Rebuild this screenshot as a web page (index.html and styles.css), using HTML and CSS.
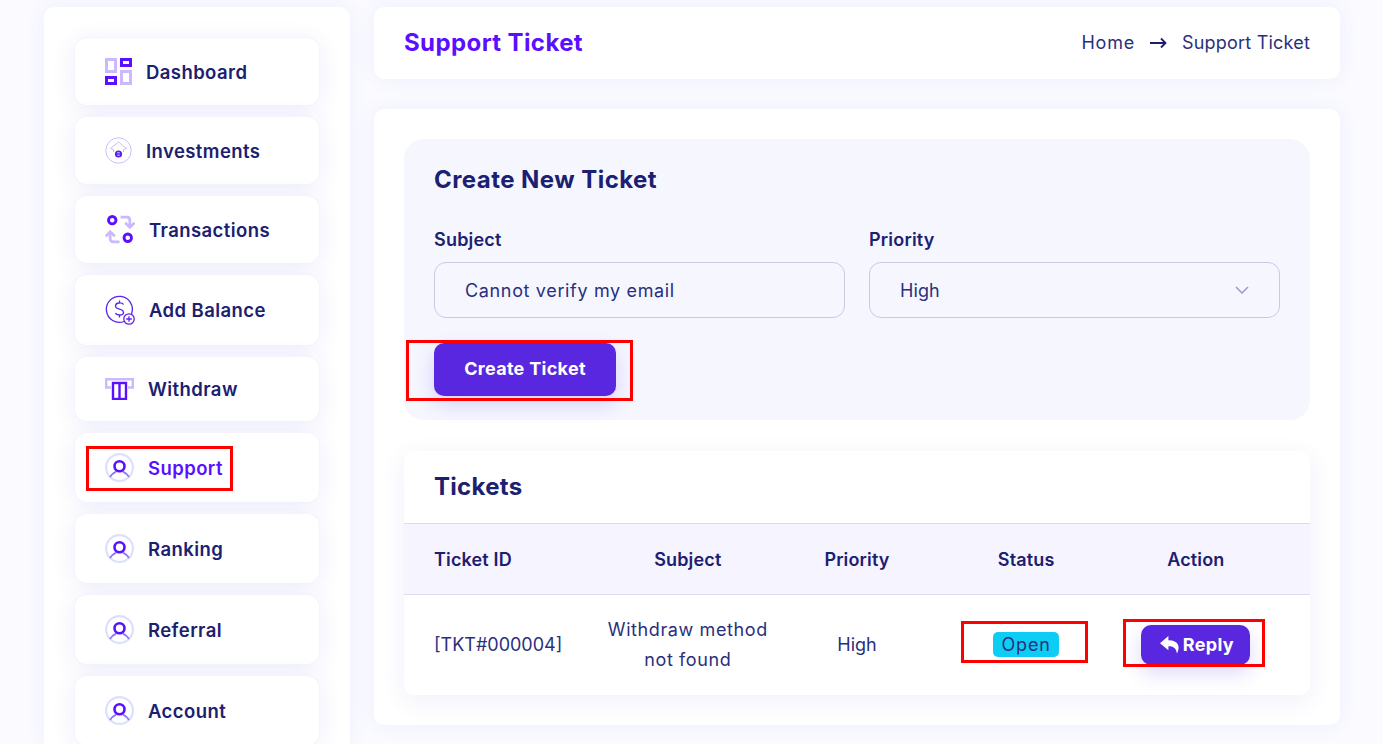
FILE: index.html
```html
<!DOCTYPE html>
<html lang="en">
<head>
<meta charset="UTF-8" />
<meta name="viewport" content="width=device-width, initial-scale=1.0"/>
<title>Support Ticket</title>
<link rel="stylesheet" href="styles.css">
</head>
<body>

<svg class="defs" width="0" height="0">
  <symbol id="user" viewBox="0 0 29 29">
    <circle cx="14.5" cy="14.5" r="13.4" fill="none" stroke="#dde0fd" stroke-width="2.2"/>
    <path d="M5 24 C6.5 21.5 8.5 19.8 11 18.6 M24 24 C22.5 21.5 20.5 19.8 18 18.6" fill="none" stroke="#8a7bf5" stroke-width="1.8"/>
    <circle cx="14.5" cy="13.2" r="5" fill="none" stroke="#5a10ff" stroke-width="2.6"/>
  </symbol>
</svg>

<div class="page">
  <aside class="sidebar">
    <a class="nav-item">
      <svg class="icon" width="27" height="27" viewBox="0 0 27 27">
        <rect x="1.5" y="1.5" width="9" height="12" fill="none" stroke="#cbb8ff" stroke-width="3"/>
        <rect x="16.5" y="1.5" width="9" height="6" fill="none" stroke="#5a10ff" stroke-width="3"/>
        <rect x="1.5" y="19.5" width="9" height="6" fill="none" stroke="#5a10ff" stroke-width="3"/>
        <rect x="16.5" y="13.5" width="9" height="12" fill="none" stroke="#cbb8ff" stroke-width="3"/>
      </svg>
      <span>Dashboard</span>
    </a>
    <a class="nav-item">
      <svg class="icon" width="27" height="27" viewBox="0 0 27 27">
        <circle cx="13.5" cy="13.5" r="12.7" fill="none" stroke="#cbbcff" stroke-width="1"/>
        <path d="M5.5 11.5 L13.5 5 L21.5 11.5 L18.5 12.5 V15 M8.5 15 V12.5 L5.5 11.5" fill="none" stroke="#cbbcff" stroke-width="1"/>
        <circle cx="13.5" cy="17" r="3.6" fill="#5a22e8"/>
        <path d="M12.2 15.8 H14.8 M12.2 18.2 H14.8" stroke="#fff" stroke-width=".8"/>
      </svg>
      <span>Investments</span>
    </a>
    <a class="nav-item">
      <svg class="icon" width="30" height="29" viewBox="0 0 29 28">
        <circle cx="7" cy="5" r="3.6" fill="none" stroke="#5a10ff" stroke-width="2.8"/>
        <circle cx="22" cy="22" r="3.6" fill="none" stroke="#5a10ff" stroke-width="2.8"/>
        <path d="M15 2 H21 Q24 2 24 5 V11 M19.5 7.5 L24 12 L28.5 7.5" fill="none" stroke="#cbb8ff" stroke-width="2.6"/>
        <path d="M14 26 H8 Q5 26 5 23 V17 M.8 20.5 L5 16 L9.5 20.5" fill="none" stroke="#cbb8ff" stroke-width="2.6"/>
      </svg>
      <span>Transactions</span>
    </a>
    <a class="nav-item">
      <svg class="icon" width="30" height="30" viewBox="0 0 30 30">
        <path d="M19 26.5 A13 13 0 1 1 26.5 19" fill="none" stroke="#5a22e8" stroke-width="1.3"/>
        <path d="M18.5 9.5 C17.5 7.5 10.5 7 10.5 11 C10.5 15.5 18.5 12.5 18.5 17.5 C18.5 21 11.5 20.5 10.5 18 M14.5 5.5 V8 M14.5 20 V22.5" fill="none" stroke="#5a22e8" stroke-width="1.3"/>
        <circle cx="24" cy="24" r="5.2" fill="#fff" stroke="#5a22e8" stroke-width="1.3"/>
        <path d="M21.2 24 H26.8 M24 21.2 V26.8" stroke="#5a22e8" stroke-width="1.3"/>
      </svg>
      <span>Add Balance</span>
    </a>
    <a class="nav-item">
      <svg class="icon" width="29" height="22" viewBox="0 0 29 22">
        <path d="M6 9.5 H1.2 V1.2 H27.8 V9.5 H23" fill="none" stroke="#cbb8ff" stroke-width="2.4"/>
        <rect x="8" y="5" width="13" height="16" fill="#fff" stroke="#5a10ff" stroke-width="2.4"/>
        <path d="M14.5 5 V21" stroke="#5a10ff" stroke-width="2.4"/>
      </svg>
      <span>Withdraw</span>
    </a>
    <a class="nav-item active">
      <svg class="icon" width="29" height="29"><use href="#user"/></svg>
      <span>Support</span>
    </a>
    <a class="nav-item">
      <svg class="icon" width="29" height="29"><use href="#user"/></svg>
      <span>Ranking</span>
    </a>
    <a class="nav-item">
      <svg class="icon" width="29" height="29"><use href="#user"/></svg>
      <span>Referral</span>
    </a>
    <a class="nav-item">
      <svg class="icon" width="29" height="29"><use href="#user"/></svg>
      <span>Account</span>
    </a>
  </aside>

  <main class="main">
    <header class="page-head">
      <h2>Support Ticket</h2>
      <div class="crumbs">
        <span class="crumb-home">Home</span>
        <svg width="17" height="12" viewBox="0 0 17 12"><path d="M0 6 H15.5 M11 1.5 L15.5 6 L11 10.5" fill="none" stroke="#1b1f6e" stroke-width="1.8"/></svg>
        <span>Support Ticket</span>
      </div>
    </header>

    <section class="content">
      <div class="create-panel">
        <h3>Create New Ticket</h3>
        <div class="form-row">
          <div class="field">
            <label for="subject">Subject</label>
            <input id="subject" type="text" value="Cannot verify my email">
          </div>
          <div class="field">
            <label>Priority</label>
            <div class="select">
              <span>High</span>
              <svg width="14" height="8" viewBox="0 0 14 8"><path d="M1 1 L7 7 L13 1" fill="none" stroke="#9d9fc9" stroke-width="1.6"/></svg>
            </div>
          </div>
        </div>
        <button class="btn btn-create">Create Ticket</button>
      </div>

      <div class="tickets">
        <h3>Tickets</h3>
        <table>
          <thead>
            <tr>
              <th class="col-id">Ticket ID</th>
              <th>Subject</th>
              <th>Priority</th>
              <th>Status</th>
              <th class="col-action">Action</th>
            </tr>
          </thead>
          <tbody>
            <tr>
              <td class="col-id">[TKT#000004]</td>
              <td class="wide-text">Withdraw method not found</td>
              <td>High</td>
              <td><span class="badge">Open</span></td>
              <td class="col-action">
                <button class="btn btn-reply">
                  <svg width="21" height="18" viewBox="0 0 20 17"><path d="M8 0 L0 6.8 L8 13.6 V9.6 C12.5 9.6 15 10.8 16.2 16.5 C19.5 10.5 18 4 8 3.9 Z" fill="#fff"/></svg>
                  Reply
                </button>
              </td>
            </tr>
          </tbody>
        </table>
      </div>
    </section>
  </main>
</div>

<!-- red review boxes drawn over the shot -->
<div class="mark mark-support"></div>
<div class="mark mark-create"></div>
<div class="mark mark-open"></div>
<div class="mark mark-reply"></div>

</body>
</html>
```

FILE: styles.css
```css
* {
  box-sizing: border-box;
}

body {
  margin: 0;
  height: 744px;
  overflow: hidden;
  position: relative;
  font-family: Inter, "Noto Sans", sans-serif;
  background: #fafaff;
  color: #1b2070;
}

.defs {
  display: block;
  height: 0;
}

.page {
  display: flex;
  gap: 24px;
  height: 744px;
  overflow: hidden;
  padding: 7px 43px 0 44px;
  align-items: flex-start;
}

/* sidebar */
.sidebar {
  width: 306px;
  height: 737px;
  flex: none;
  display: flex;
  flex-direction: column;
  gap: 12px;
  padding: 31px 31px 0;
  overflow: hidden;
  background: #fff;
  border-radius: 10px 10px 0 0;
  box-shadow: 0 0 20px rgba(90, 80, 220, 0.07);
}

.nav-item {
  display: flex;
  align-items: center;
  gap: 14px;
  height: 69px;
  padding-left: 30px;
  background: #fff;
  border-radius: 12px;
  box-shadow: 0 0 0 1px #f4f4fc, 0 4px 24px rgba(70, 70, 220, 0.1);
  font-size: 18.5px;
  font-weight: 600;
  letter-spacing: 0.42px;
  flex: none;
}

.nav-item:nth-child(-n+3) {
  height: 67px;
}

.nav-item:nth-child(4) {
  height: 70px;
}

.nav-item:nth-child(5) {
  height: 64px;
}

.icon {
  flex: none;
}

.active {
  color: #5a10ff;
}

/* main column */
.main {
  width: 966px;
  flex: none;
  display: flex;
  flex-direction: column;
  gap: 30px;
}

.page-head {
  height: 72px;
  padding: 0 30px 1px;
  display: flex;
  align-items: center;
  justify-content: space-between;
  background: #fff;
  border-radius: 10px;
  box-shadow: 0 0 20px rgba(90, 80, 220, 0.07);
}

.page-head h2 {
  margin: 0;
  font-size: 24px;
  font-weight: 700;
  letter-spacing: 0.4px;
  color: #5a10ff;
}

.crumbs {
  display: flex;
  align-items: center;
  gap: 15px;
  font-size: 18px;
  font-weight: 400;
  letter-spacing: 0.2px;
  color: #2a2f7d;
}

.crumb-home {
  letter-spacing: 0.8px;
}

.content {
  height: 616px;
  padding: 30px;
  background: #fff;
  border-radius: 10px;
  box-shadow: 0 0 20px rgba(90, 80, 220, 0.07);
}

.create-panel {
  height: 281px;
  padding: 25px 30px 0;
  background: #f6f6ff;
  border-radius: 20px;
}

h3 {
  margin: 0;
  font-size: 24px;
  line-height: 32px;
  font-weight: 700;
  letter-spacing: 0.45px;
}

.tickets h3 {
  letter-spacing: 0.3px;
}

.form-row {
  display: grid;
  grid-template-columns: 411px 411px;
  gap: 24px;
  margin-top: 32px;
}

.field label {
  display: block;
  font-size: 18px;
  line-height: 24px;
  font-weight: 600;
  letter-spacing: 0.2px;
  margin-bottom: 10px;
}

.field input,
.select {
  display: flex;
  align-items: center;
  justify-content: space-between;
  width: 100%;
  height: 56px;
  padding: 0 30px;
  border: 1px solid #c9c9e6;
  border-radius: 12px;
  background: #f6f6ff;
  font: 400 18px Inter, "Noto Sans", sans-serif;
  letter-spacing: 0.65px;
  color: #2a2f7d;
}

.select {
  letter-spacing: 0.1px;
}

.btn {
  border: none;
  color: #fff;
  background: #5a27e0;
  font-family: inherit;
  font-weight: 700;
  letter-spacing: 0.3px;
  cursor: pointer;
  box-shadow: 0 8px 20px rgba(90, 60, 230, 0.2);
}

.btn-create {
  display: block;
  margin-top: 25px;
  width: 182px;
  height: 53px;
  padding-bottom: 4px;
  border-radius: 10px;
  font-size: 18px;
}

/* tickets table */
.tickets {
  height: 244px;
  margin-top: 31px;
  background: #fff;
  border-radius: 10px;
  box-shadow: 0 6px 24px rgba(80, 80, 210, 0.09);
}

.tickets h3 {
  padding: 20px 30px 0;
  height: 72px;
}

table {
  width: 100%;
  table-layout: fixed;
  border-collapse: collapse;
  font-size: 18px;
}

th {
  height: 71px;
  width: 169px;
  padding-bottom: 1px;
  font-weight: 600;
  letter-spacing: 0.15px;
  text-align: center;
  background: #f6f4ff;
  border-top: 1px solid #dcdcec;
  border-bottom: 1px solid #dcdcec;
}

td {
  height: 100px;
  padding: 0;
  text-align: center;
  font-weight: 400;
  line-height: 30px;
  color: #2a2f7d;
}

.wide-text {
  letter-spacing: 0.6px;
}

.col-id {
  width: 199px;
  padding-left: 30px;
  text-align: left;
}

.col-action {
  width: 199px;
  padding-right: 30px;
}

.badge {
  display: inline-block;
  padding: 0 8px;
  line-height: 25px;
  border-radius: 5px;
  letter-spacing: 0.9px;
  background: #0dcdf4;
}

.btn-reply {
  display: inline-flex;
  align-items: center;
  gap: 2px;
  width: 109px;
  height: 40px;
  padding-left: 9px;
  justify-content: center;
  border-radius: 10px;
  font-size: 18px;
}

/* red boxes */
.mark {
  position: absolute;
  border: 3px solid #f00;
}

.mark-support {
  left: 86px;
  top: 446px;
  width: 147px;
  height: 45px;
}

.mark-create {
  left: 406px;
  top: 340px;
  width: 227px;
  height: 61px;
}

.mark-open {
  left: 961px;
  top: 621px;
  width: 127px;
  height: 42px;
}

.mark-reply {
  left: 1123px;
  top: 619px;
  width: 142px;
  height: 48px;
}
```
